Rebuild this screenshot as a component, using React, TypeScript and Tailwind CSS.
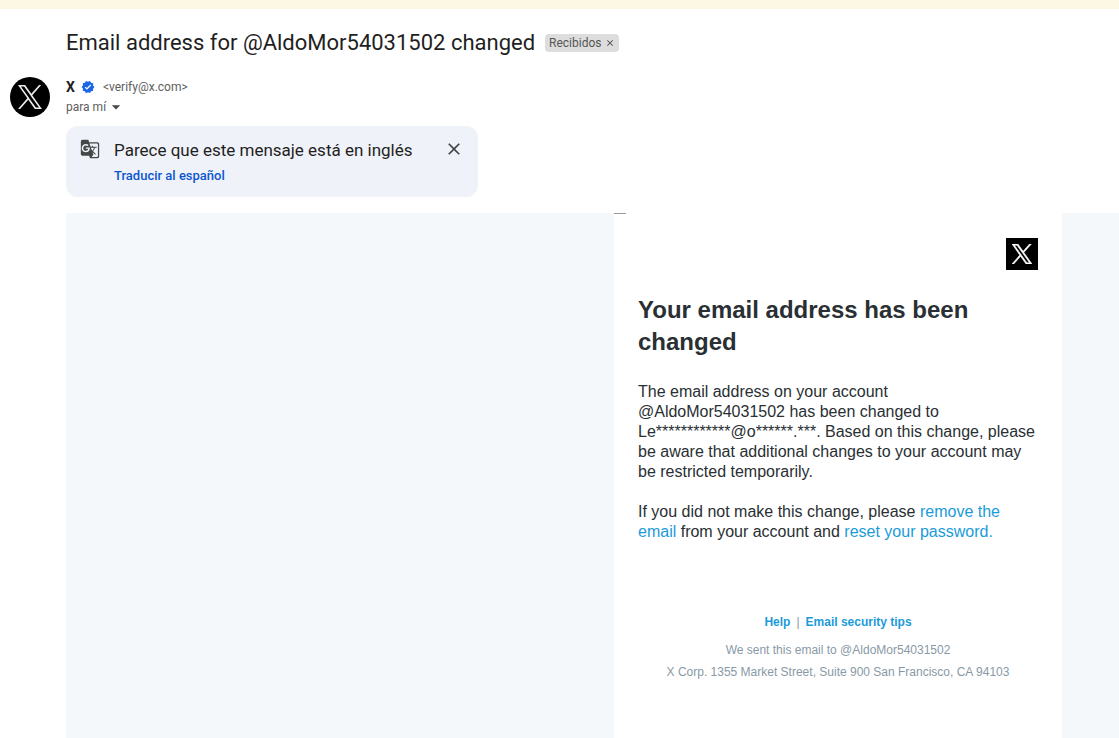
import type { ReactNode } from "react";
import { MdArrowDropDown, MdClose, MdGTranslate, MdVerified } from "react-icons/md";

function XLogo({ className }: { className: string }) {
    return (
        <svg viewBox="0 0 24 24" fill="currentColor" aria-hidden="true" className={className}>
            <path d="M14.258 10.152 23.176 0h-2.113l-7.747 8.813L7.133 0H0l9.352 13.328L0 23.973h2.113l8.176-9.309 6.531 9.309h7.133zm-2.895 3.293-.949-1.328L2.875 1.56h3.246l6.086 8.523.945 1.328 7.91 11.078h-3.246z" />
        </svg>
    );
}

function EmailLink({ children }: { children: ReactNode }) {
    return (
        <a href="#" className="text-[#1b9bd8]">
            {children}
        </a>
    );
}

function SubjectLine() {
    return (
        <div className="flex items-center gap-2.5 pl-14">
            <h1 className="text-[22px] leading-7 text-[#1f1f1f]">Email address for @AldoMor54031502 changed</h1>
            <span className="flex h-[18px] items-center gap-1 rounded bg-[#dddddd] px-1 text-xs text-[#555555]">
                Recibidos
                <button type="button" aria-label="Quitar etiqueta Recibidos">
                    <MdClose className="size-2.5 text-[#444444]" />
                </button>
            </span>
        </div>
    );
}

function Sender() {
    return (
        <div className="mt-5 flex gap-4">
            <div className="flex size-10 items-center justify-center rounded-full bg-black text-[#eeeeee]">
                <XLogo className="size-6" />
            </div>
            <div className="text-xs leading-5 text-[#5e5e5e]">
                <div className="flex items-center">
                    <span className="text-sm leading-5 font-bold text-[#1f1f1f]">X</span>
                    <MdVerified className="ml-1.5 size-3.5 text-[#1a66e8]" />
                    <span className="ml-2">&lt;verify@x.com&gt;</span>
                </div>
                <button type="button" className="flex items-center">
                    para mí
                    <MdArrowDropDown className="size-5 text-[#444746]" />
                </button>
            </div>
        </div>
    );
}

function TranslateBanner() {
    return (
        <div className="mt-[9px] ml-14 flex w-[412px] items-start rounded-xl bg-[#eff2f8] px-3.5 pt-3 pb-[11px]">
            <MdGTranslate className="mt-px size-5 shrink-0 text-[#444746]" />
            <div className="ml-3.5 flex-1">
                <p className="text-[17px] leading-6 text-[#1f1f1f]">Parece que este mensaje está en inglés</p>
                <button type="button" className="block pt-1 text-[13px] leading-5 font-medium text-[#0b57d0]">
                    Traducir al español
                </button>
            </div>
            <button type="button" aria-label="Cerrar" className="mt-px">
                <MdClose className="size-5 text-[#444746]" />
            </button>
        </div>
    );
}

function EmailBody() {
    return (
        <div className="mt-4 ml-14 flex flex-1 bg-[#f5f8fb] font-['Liberation_Sans',Arial,sans-serif]">
            <article className="mr-[57px] ml-auto w-[448px] bg-white pb-12">
                <div className="h-px w-3 bg-[#999999]" />
                <div className="px-6 pt-6">
                    <div className="ml-auto flex size-8 items-center justify-center bg-black text-white">
                        <XLogo className="size-5 stroke-current stroke-[0.7]" />
                    </div>
                    <h2 className="mt-6 text-2xl leading-8 font-bold text-[#292f33]">
                        Your email address has been changed
                    </h2>
                    <div className="mt-6 space-y-5 text-base leading-5 text-[#292f33]">
                        <p>
                            The email address on your account @AldoMor54031502 has been changed to
                            Le************@o******.***. Based on this change, please be aware that additional
                            changes to your account may be restricted temporarily.
                        </p>
                        <p>
                            If you did not make this change, please <EmailLink>remove the email</EmailLink> from
                            your account and <EmailLink>reset your password.</EmailLink>
                        </p>
                    </div>
                    <footer className="mt-18 text-center text-xs text-[#8899a6]">
                        <nav className="flex justify-center gap-1.5 font-bold">
                            <EmailLink>Help</EmailLink>
                            <span className="font-normal">|</span>
                            <EmailLink>Email security tips</EmailLink>
                        </nav>
                        <p className="mt-3">We sent this email to @AldoMor54031502</p>
                        <p className="mt-1.5">X Corp. 1355 Market Street, Suite 900 San Francisco, CA 94103</p>
                    </footer>
                </div>
            </article>
        </div>
    );
}

export default function App() {
    return (
        <div className="flex min-h-screen flex-col bg-white font-[Roboto,Arial,sans-serif]">
            <div className="h-[9px] bg-[#fcf8e3]" />
            <main className="flex flex-1 flex-col pt-5 pl-2.5">
                <SubjectLine />
                <Sender />
                <TranslateBanner />
                <EmailBody />
            </main>
        </div>
    );
}
